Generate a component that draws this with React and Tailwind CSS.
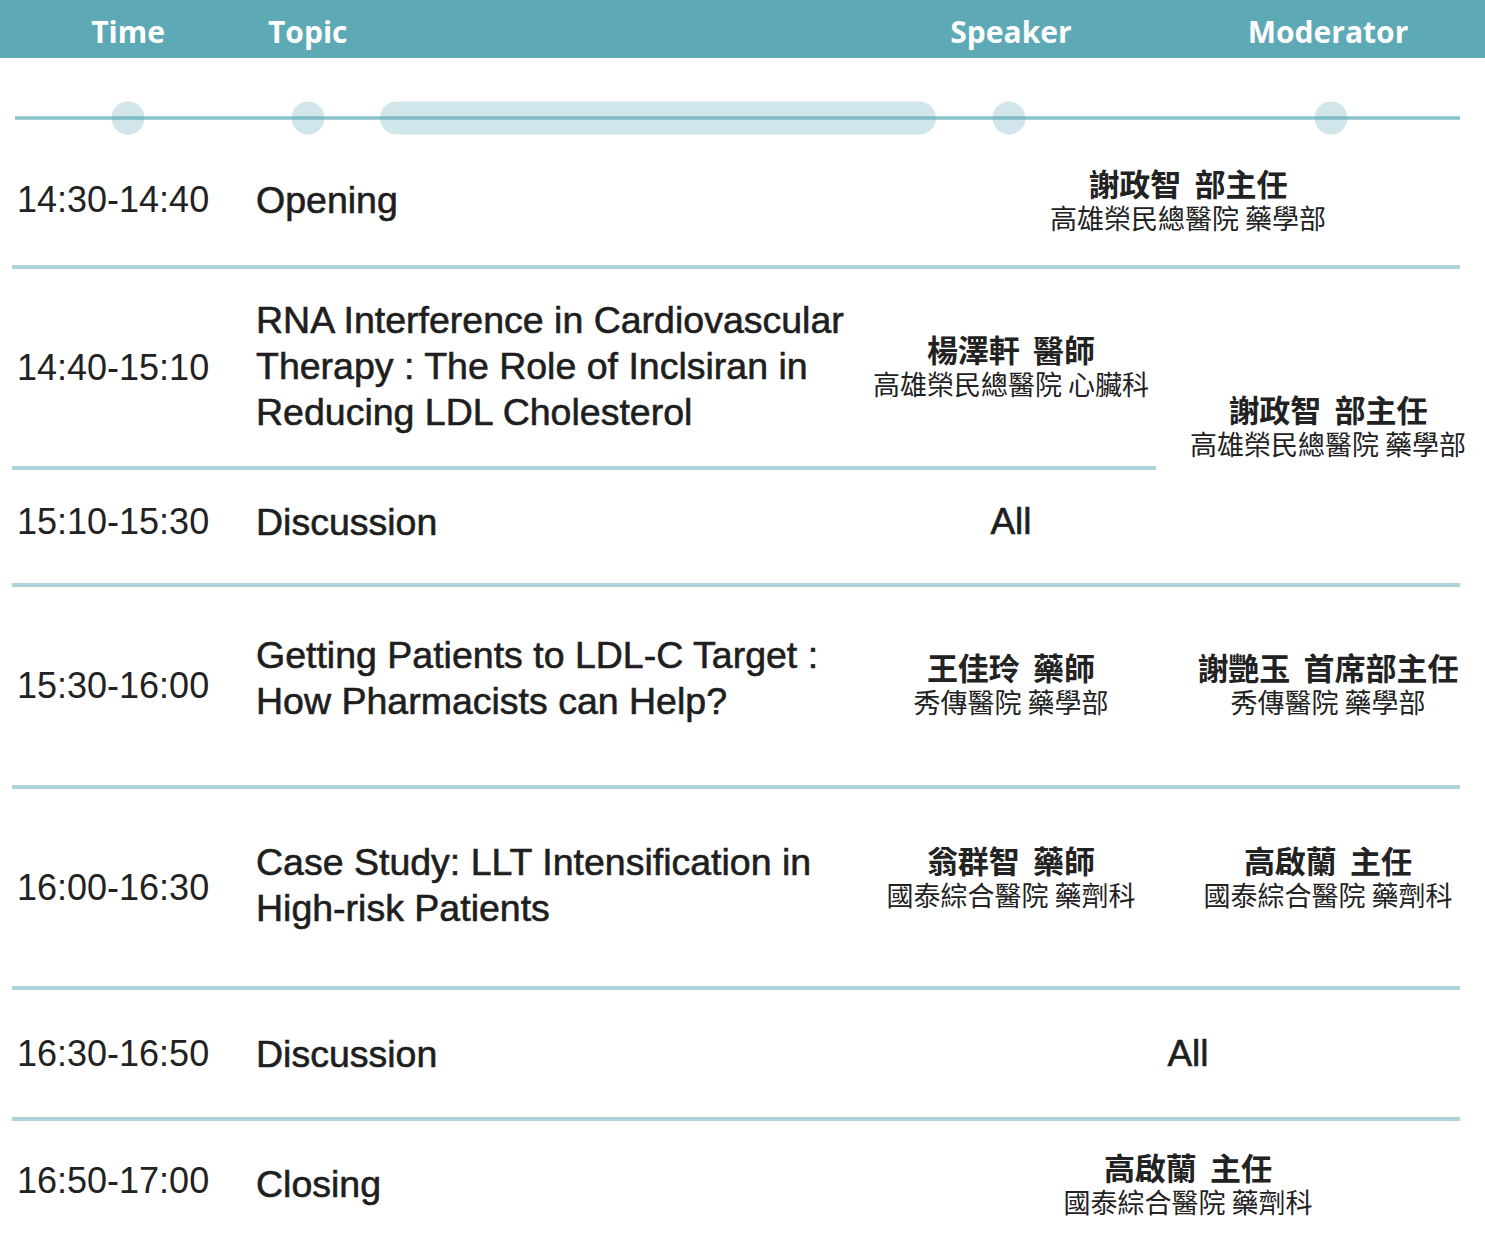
import React from "react";

const cols = "grid grid-cols-[256px_610px_290px_1fr]";
const timeCls =
  "flex items-center pl-[17px] font-['Liberation_Sans',Arial,sans-serif] text-[36px] leading-[44px] text-[#222]";
const topicCls =
  "flex items-center whitespace-nowrap font-['Liberation_Sans',Arial,sans-serif] text-[37.5px] leading-[46px] text-[#1e1e1e] [-webkit-text-stroke:0.6px_#1e1e1e]";
const allCls =
  "font-['Liberation_Sans',Arial,sans-serif] text-[37px] leading-[46px] text-[#1e1e1e] [-webkit-text-stroke:0.6px_#1e1e1e]";

const Person = ({ name, org }) => (
  <div className="flex flex-col items-center whitespace-nowrap font-['Noto_Sans_CJK_TC',sans-serif] text-[#222]">
    <div className="text-[31px] leading-[36px] font-bold [word-spacing:0.2em]">{name}</div>
    <div className="text-[27px] leading-[34px]">{org}</div>
  </div>
);

const Divider = () => <div className="ml-[12px] w-[1448px] h-[4px] bg-[#acd4da]" />;

const Timeline = () => (
  <svg width="1485" height="34" viewBox="0 0 1485 34" className="block mt-[43px]">
    <line x1="15" y1="17" x2="1460" y2="17" stroke="#8bc3cc" strokeWidth="3.5" />
    {[128, 308, 1009, 1331].map((cx) => (
      <circle key={cx} cx={cx} cy="17" r="16.5" fill="#5ea9b6" fillOpacity="0.29" />
    ))}
    <rect x="380" y="0.5" width="556" height="33" rx="16.5" fill="#5ea9b6" fillOpacity="0.29" />
  </svg>
);

export default function App() {
  return (
    <div className="w-[1485px] min-h-[1237px] bg-white">
      {/* header */}
      <div className={`${cols} h-[58px] pt-[4px] bg-[#5ea9b6] items-center font-['Open_Sans',sans-serif] font-bold text-[30px] text-white`}>
        <div className="text-center">Time</div>
        <div className="pl-[12px]">Topic</div>
        <div className="text-center">Speaker</div>
        <div className="text-center pl-[15px]">Moderator</div>
      </div>

      <Timeline />

      {/* opening */}
      <div className={`${cols} h-[130px]`}>
        <div className={timeCls}>14:30-14:40</div>
        <div className={topicCls}>Opening</div>
        <div className="col-span-2 flex items-center justify-center pl-[25px]">
          <Person name="謝政智 部主任" org="高雄榮民總醫院 藥學部" />
        </div>
      </div>
      <Divider />

      {/* RNA + discussion, moderator shared */}
      <div className={`${cols} grid-rows-[197px_4px_113px]`}>
        <div className={timeCls}>14:40-15:10</div>
        <div className={`${topicCls} pb-[4px]`}>
          <div>
            RNA Interference in Cardiovascular
            <br />
            Therapy : The Role of Inclsiran in
            <br />
            Reducing LDL Cholesterol
          </div>
        </div>
        <div className="flex items-center justify-center pb-[4px]">
          <Person name="楊澤軒 醫師" org="高雄榮民總醫院 心臟科" />
        </div>
        <div className="row-span-3 flex items-center justify-center pl-[15px]">
          <Person name="謝政智 部主任" org="高雄榮民總醫院 藥學部" />
        </div>
        <div className="col-span-3 ml-[12px] bg-[#acd4da]" />
        <div className={`${timeCls} pb-[10px]`}>15:10-15:30</div>
        <div className={`${topicCls} pb-[10px]`}>Discussion</div>
        <div className="flex items-center justify-center pb-[10px]">
          <span className={allCls}>All</span>
        </div>
      </div>
      <Divider />

      {/* LDL-C target */}
      <div className={`${cols} h-[198px]`}>
        <div className={timeCls}>15:30-16:00</div>
        <div className={`${topicCls} pb-[16px]`}>
          <div>
            Getting Patients to LDL-C Target :
            <br />
            How Pharmacists can Help?
          </div>
        </div>
        <div className="flex items-center justify-center pb-[4px]">
          <Person name="王佳玲 藥師" org="秀傳醫院 藥學部" />
        </div>
        <div className="flex items-center justify-center pl-[15px] pb-[4px]">
          <Person name="謝艷玉 首席部主任" org="秀傳醫院 藥學部" />
        </div>
      </div>
      <Divider />

      {/* case study */}
      <div className={`${cols} h-[197px]`}>
        <div className={timeCls}>16:00-16:30</div>
        <div className={`${topicCls} pb-[6px]`}>
          <div>
            Case Study: LLT Intensification in
            <br />
            High-risk Patients
          </div>
        </div>
        <div className="flex items-center justify-center pb-[22px]">
          <Person name="翁群智 藥師" org="國泰綜合醫院 藥劑科" />
        </div>
        <div className="flex items-center justify-center pl-[15px] pb-[22px]">
          <Person name="高啟蘭 主任" org="國泰綜合醫院 藥劑科" />
        </div>
      </div>
      <Divider />

      {/* discussion */}
      <div className={`${cols} h-[127px]`}>
        <div className={timeCls}>16:30-16:50</div>
        <div className={topicCls}>Discussion</div>
        <div className="col-span-2 flex items-center justify-center pl-[25px]">
          <span className={allCls}>All</span>
        </div>
      </div>
      <Divider />

      {/* closing */}
      <div className={`${cols} h-[120px]`}>
        <div className={timeCls}>16:50-17:00</div>
        <div className={`${topicCls} pt-[6px]`}>Closing</div>
        <div className="col-span-2 flex items-center justify-center pl-[25px] pt-[6px]">
          <Person name="高啟蘭 主任" org="國泰綜合醫院 藥劑科" />
        </div>
      </div>
    </div>
  );
}
